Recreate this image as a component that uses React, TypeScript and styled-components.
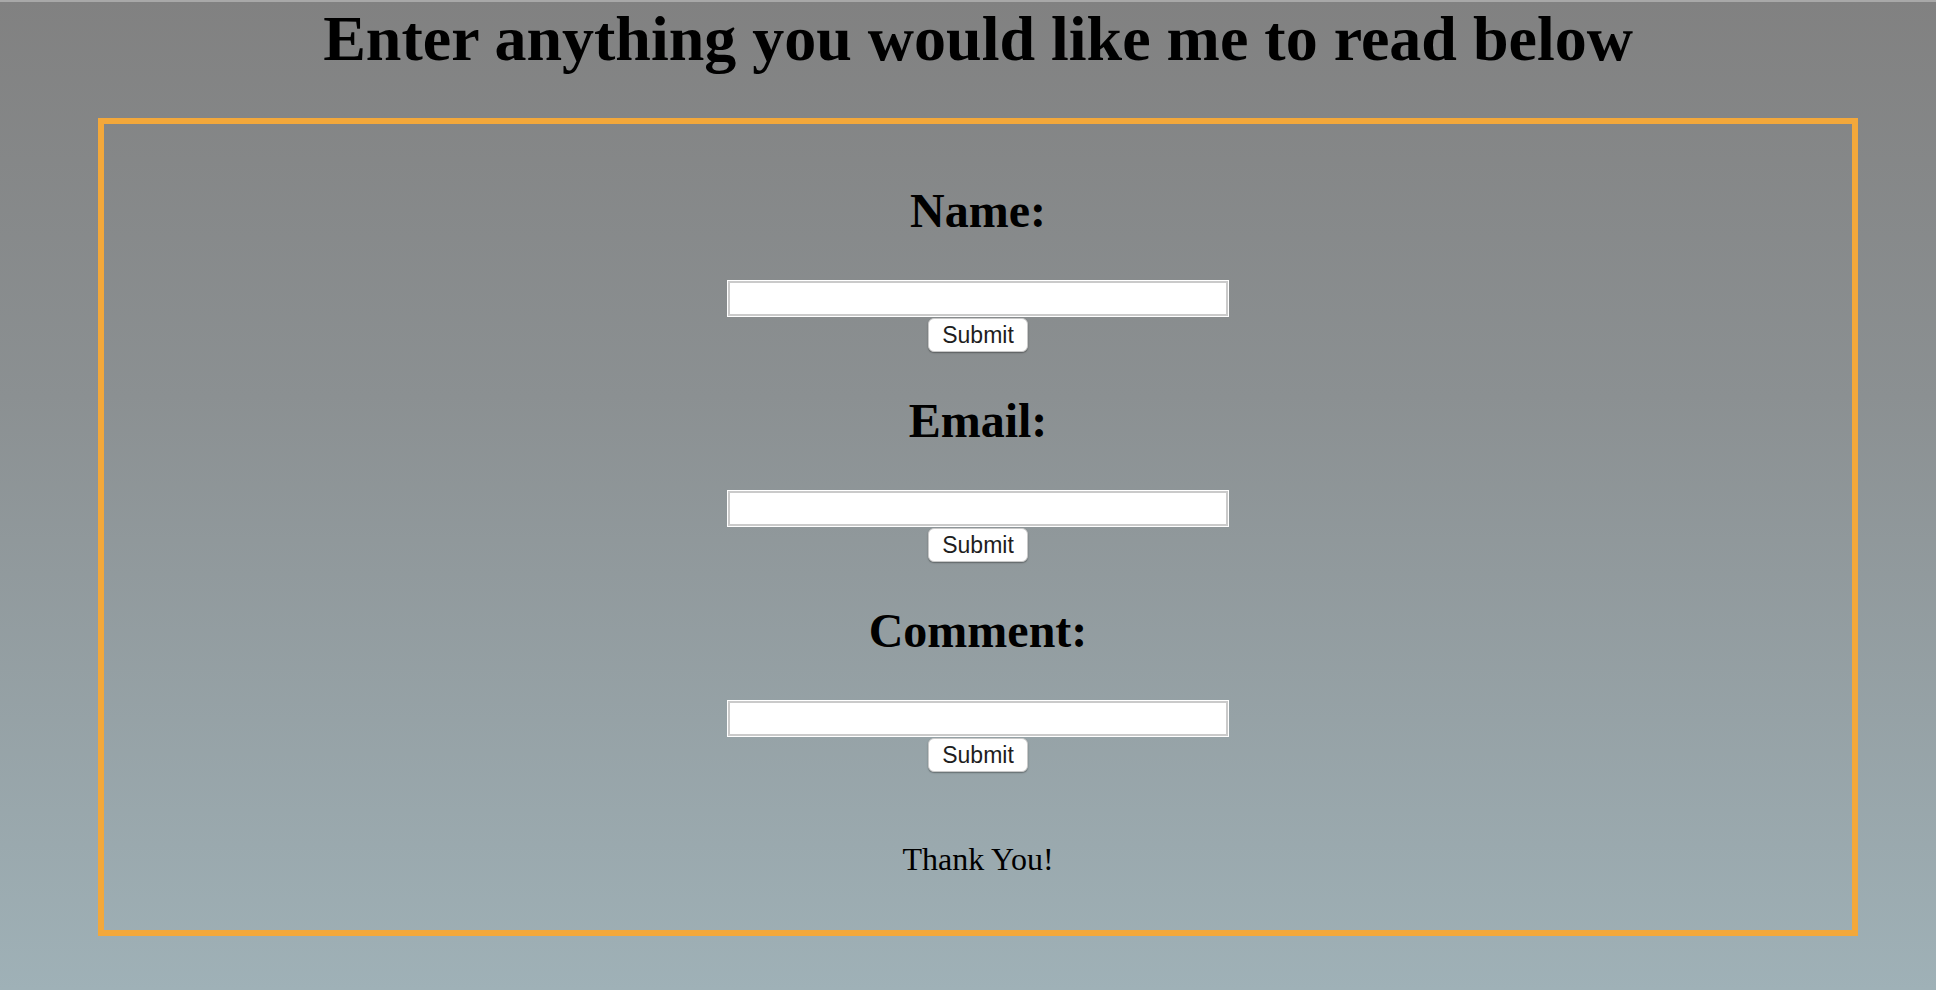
import React from "react";
import styled, { createGlobalStyle } from "styled-components";

const GlobalStyle = createGlobalStyle`
  html, body {
    margin: 0;
    padding: 0;
  }
  body {
    min-height: 990px;
    box-sizing: border-box;
    border-top: 2px solid #a8a8a8;
    background: linear-gradient(180deg, #818181 0%, #8b9092 40%, #9fb1b7 100%);
    font-family: "Liberation Serif", "Times New Roman", serif;
    color: #000;
  }
`;

const Page = styled.div`
  display: flex;
  flex-direction: column;
  align-items: stretch;
  padding: 0 58px 0 78px;
`;

const Title = styled.h1`
  margin: 0 0 42px;
  font-size: 64px;
  line-height: 74px;
  font-weight: bold;
  text-align: center;
  white-space: nowrap;
`;

const Box = styled.div`
  margin: 0 20px;
  border: 6px solid #f3a83b;
  padding: 18px 0 52px;
  display: flex;
  flex-direction: column;
  align-items: center;
`;

const Section = styled.div`
  display: flex;
  flex-direction: column;
  align-items: center;
`;

const Label = styled.h2`
  margin: 41px 0 41px;
  font-size: 48px;
  line-height: 56px;
  font-weight: bold;
  text-align: center;
`;

const TextInput = styled.input`
  box-sizing: border-box;
  width: 500px;
  height: 35px;
  margin: 1px 0 2px;
  border: 2px solid #cacaca;
  box-shadow: 0 0 0 1px #ffffff;
  background: #fff;
  outline: none;
  font-size: 22px;
  padding: 0 6px;
`;

const SubmitButton = styled.button`
  box-sizing: border-box;
  width: 100px;
  height: 34px;
  border: 1px solid #c9c9c9;
  border-radius: 6px;
  background: #ffffff;
  box-shadow: 0 1px 1.5px rgba(0, 0, 0, 0.35);
  font-family: "Liberation Sans", Arial, sans-serif;
  font-size: 23px;
  color: #1e1e1e;
  padding: 0;
  cursor: pointer;
`;

const Thanks = styled.p`
  margin: 69px 0 0;
  font-size: 32px;
  line-height: 37px;
  text-align: center;
`;

const fields = ["Name:", "Email:", "Comment:"];

export default function App() {
  return (
    <>
      <GlobalStyle />
      <Page>
        <Title>Enter anything you would like me to read below</Title>
        <Box>
          {fields.map((f) => (
            <Section key={f}>
              <Label>{f}</Label>
              <TextInput type="text" />
              <SubmitButton type="button">Submit</SubmitButton>
            </Section>
          ))}
          <Thanks>Thank You!</Thanks>
        </Box>
      </Page>
    </>
  );
}
